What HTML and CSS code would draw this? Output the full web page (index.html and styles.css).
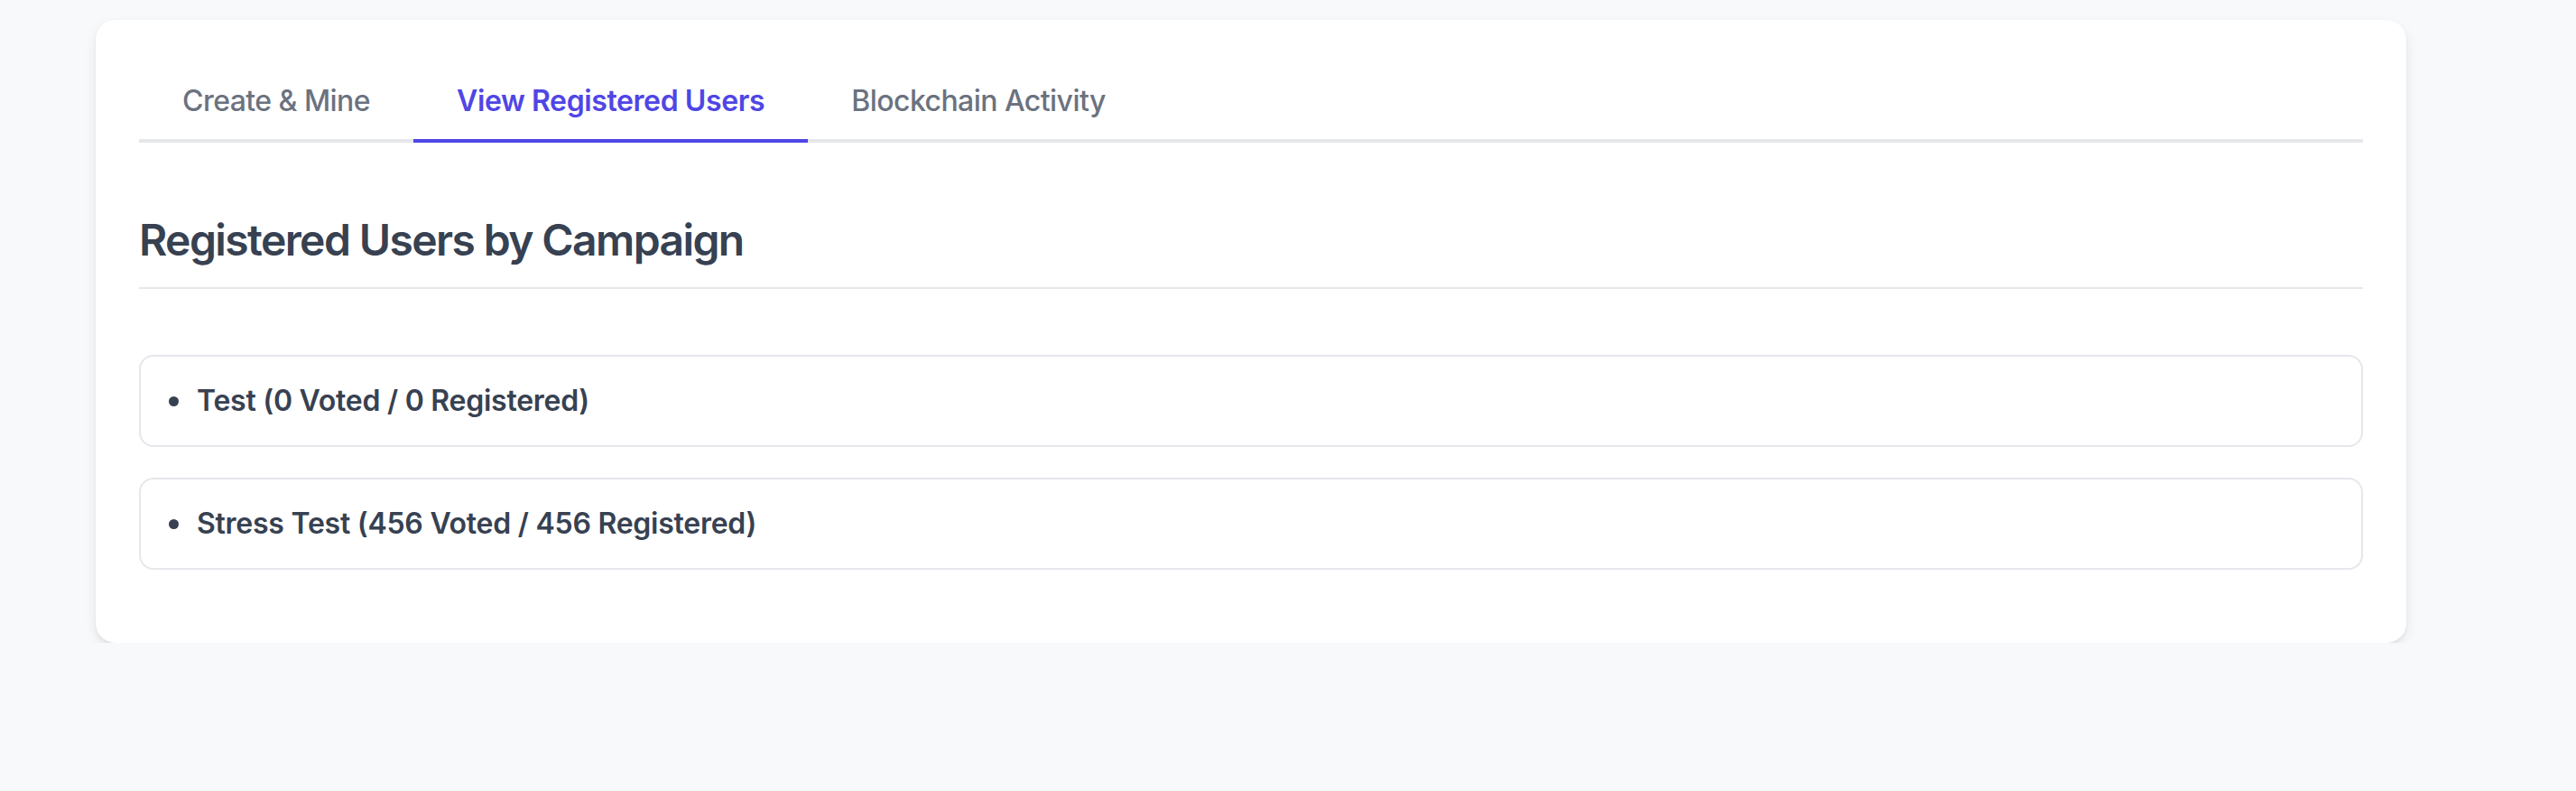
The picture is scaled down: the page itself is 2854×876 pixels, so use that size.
FILE: index.html
```html
<!DOCTYPE html>
<html lang="en">
<head>
<meta charset="utf-8">
<title>Registered Users</title>
<link rel="stylesheet" href="styles.css">
</head>
<body>
  <div class="card">
    <nav class="tabs">
      <div class="tab">Create &amp; Mine</div>
      <div class="tab active">View Registered Users</div>
      <div class="tab">Blockchain Activity</div>
    </nav>
    <h2 class="heading">Registered Users by Campaign</h2>
    <ul class="list">
      <li class="item">Test (0 Voted / 0 Registered)</li>
      <li class="item">Stress Test (456 Voted / 456 Registered)</li>
    </ul>
  </div>
</body>
</html>
```

FILE: styles.css
```css
html, body {
  margin: 0;
  padding: 0;
  background: #f8f9fb;
  font-family: Inter, "Noto Sans", sans-serif;
}

.card {
  box-sizing: border-box;
  width: 2560px;
  margin: 22px 0 0 106px;
  padding: 48px;
  background: #ffffff;
  border-radius: 22px;
  box-shadow: 0 6px 14px rgba(0, 0, 0, 0.08), 0 2px 4px rgba(0, 0, 0, 0.05);
}

.tabs {
  display: flex;
  border-bottom: 4px solid #e5e7eb;
}

.tab {
  padding: 18px 48px;
  font-size: 32px;
  line-height: 48px;
  font-weight: 500;
  letter-spacing: -0.55px;
  color: #6b7280;
  border-bottom: 4px solid transparent;
  margin-bottom: -4px;
}

.tab.active {
  color: #4f46e5;
  border-bottom-color: #4f46e5;
  font-weight: 600;
  letter-spacing: -0.4px;
}

.heading {
  margin: 76px 0 0;
  padding-bottom: 20px;
  font-size: 48px;
  line-height: 64px;
  font-weight: 600;
  letter-spacing: -1.6px;
  color: #374151;
  border-bottom: 2px solid #e5e7eb;
}

.list {
  list-style: none;
  margin: 73px 0 33px;
  padding: 0;
  display: flex;
  flex-direction: column;
  gap: 34px;
}

.item {
  display: flex;
  align-items: center;
  height: 102px;
  box-sizing: border-box;
  padding: 0 32px 0 31px;
  border: 2px solid #e5e7eb;
  border-radius: 16px;
  font-size: 32px;
  line-height: 48px;
  font-weight: 600;
  letter-spacing: -0.25px;
  color: #374151;
}

.item::before {
  content: "";
  width: 11px;
  height: 11px;
  border-radius: 50%;
  background: #374151;
  margin-right: 20px;
  flex: none;
}
```
